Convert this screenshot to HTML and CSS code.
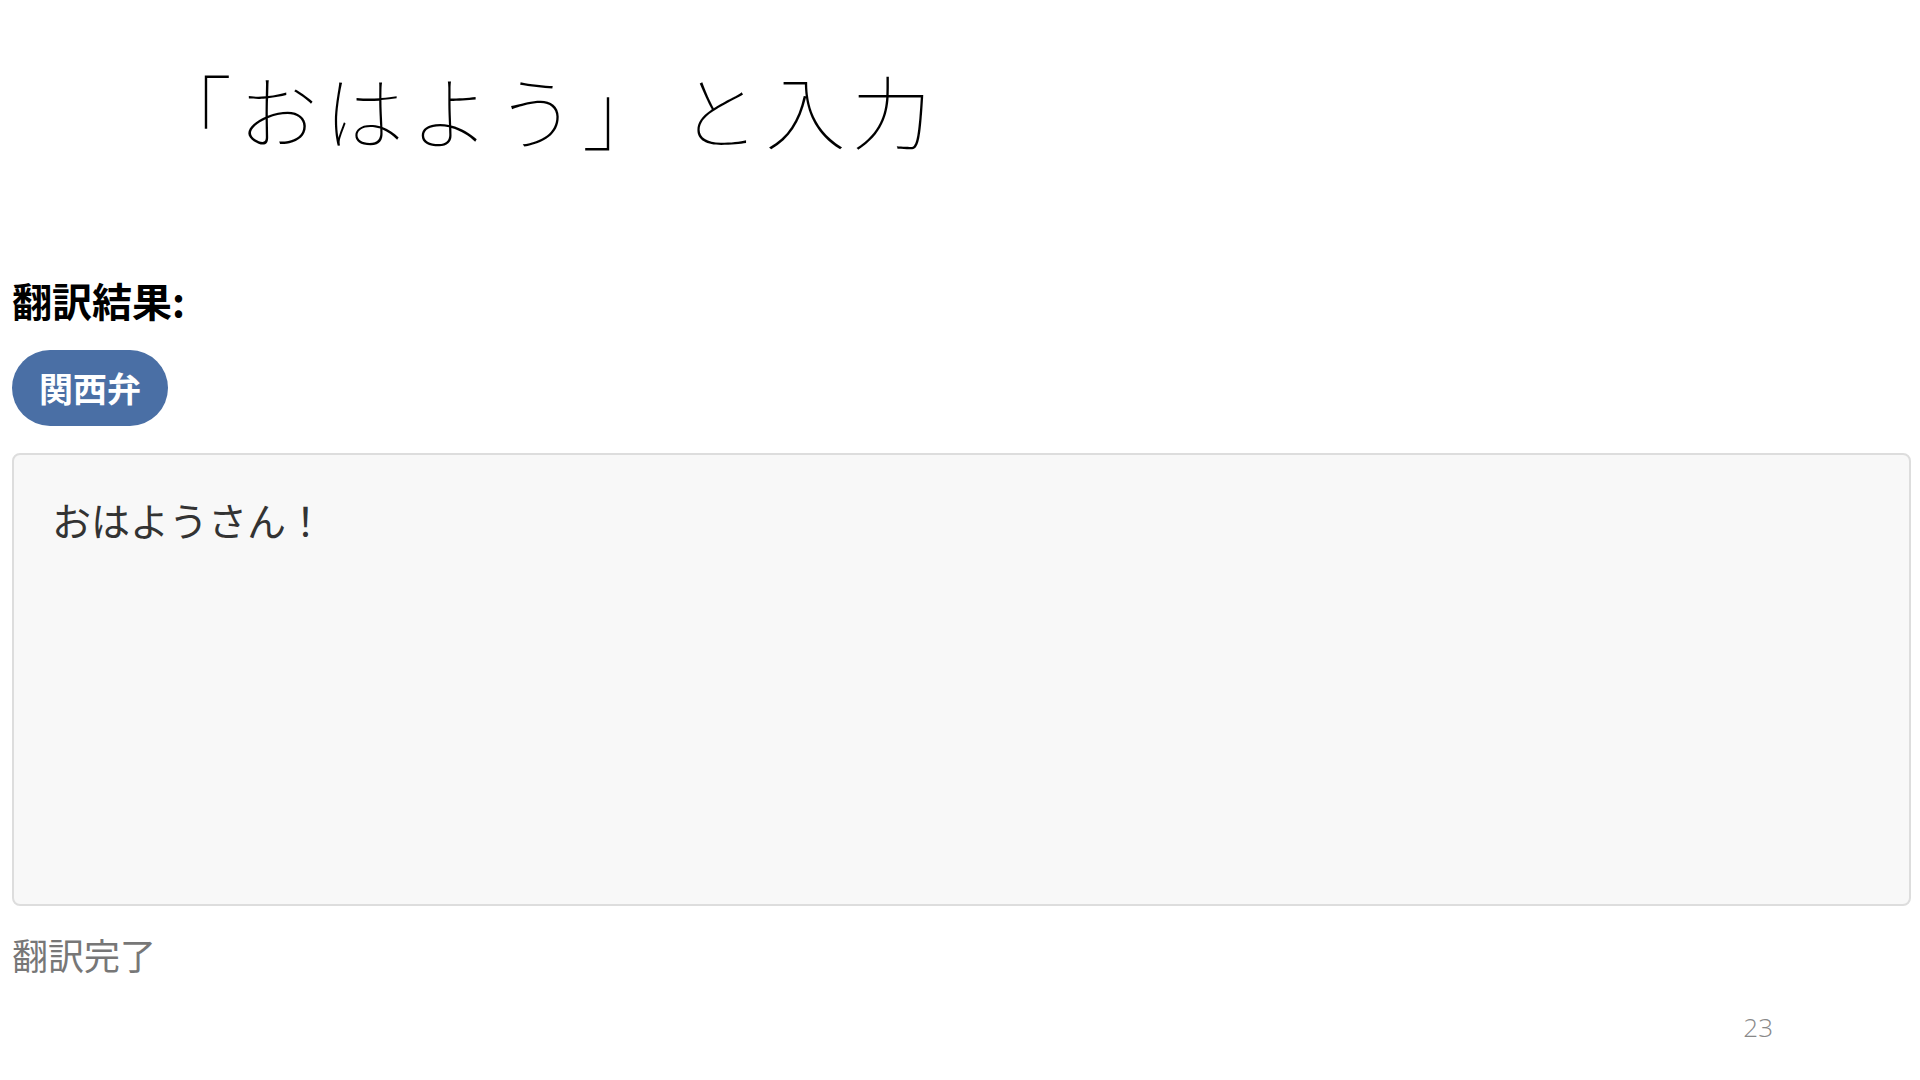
FILE: index.html
```html
<!DOCTYPE html>
<html lang="ja">

<head>
  <meta charset="UTF-8" />
  <meta name="viewport" content="width=device-width, initial-scale=1" />
  <title>「おはよう」と入力</title>
  <link rel="stylesheet" href="styles.css">
</head>

<body>
  <div class="slide">
    <h1 class="slide-title">「おはよう」 と入力</h1>

    <div class="result">
      <h2>翻訳結果:</h2>
      <span class="badge">関西弁</span>
      <div class="output">おはようさん！</div>
      <p class="status">翻訳完了</p>
    </div>

    <div class="page-number">23</div>
  </div>
</body>

</html>
```

FILE: styles.css
```css
* {
  box-sizing: border-box;
  margin: 0;
  padding: 0;
}

body {
  background: #fff;
  color: #000;
  font-family: "Noto Sans CJK JP", "Noto Sans", sans-serif;
}

.slide {
  width: 1920px;
  height: 1080px;
  overflow: hidden;
}

.slide-title {
  padding: 60px 0 0 152px;
  font-size: 80px;
  font-weight: 100;
  line-height: 1.2;
  letter-spacing: 6px;
  word-spacing: -12px;
}

.result {
  margin-top: 120px;
  padding: 0 9px 0 12px;
}

h2 {
  font-size: 40px;
  font-weight: bold;
  line-height: 1.2;
  margin-bottom: 26px;
}

.badge {
  display: inline-block;
  height: 76px;
  line-height: 76px;
  padding: 0 27px;
  border-radius: 38px;
  background: #4a6fa5;
  color: #fff;
  font-size: 34px;
  font-weight: bold;
}

.output {
  margin-top: 27px;
  height: 453px;
  padding: 35px 38px;
  background: #f8f8f8;
  border: 2px solid #ddd;
  border-radius: 8px;
  color: #333;
  font-size: 39px;
  line-height: 1.5;
}

.status {
  margin-top: 21px;
  color: #777;
  font-size: 36px;
  line-height: 1.5;
}

.page-number {
  padding-right: 147px;
  margin-top: 28px;
  text-align: right;
  color: #888;
  font-family: "Open Sans", sans-serif;
  font-size: 26px;
  font-weight: 300;
}
```
